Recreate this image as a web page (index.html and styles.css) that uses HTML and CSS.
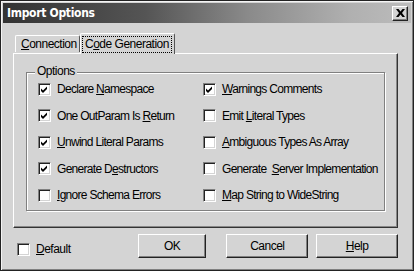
FILE: index.html
```html
<!DOCTYPE html>
<html lang="en">
<head>
  <meta charset="UTF-8">
  <title>Import Options</title>
  <link rel="stylesheet" href="styles.css">
</head>
<body>

  <!-- Dialog window -->
  <div class="dialog">

    <!-- Title bar -->
    <div class="titlebar">
      <span class="title">Import Options</span>
      <div class="close">
        <svg width="9" height="8" viewBox="0 0 9 8"><path d="M0 0h2.5l2 2.5 2-2.5H9L6 4l3 4H6.5l-2-2.5-2 2.5H0l3-4z" fill="#000"/></svg>
      </div>
    </div>

    <div class="content">
      <!-- Tabs -->
      <div class="tabs">
        <div class="tab"><u>C</u>onnection</div>
        <div class="tab active"><span class="focus">C<u>o</u>de Generation</span></div>
      </div>

      <!-- Tab page -->
      <div class="panel">
        <div class="group">
          <span class="legend">Options</span>
          <div class="options">
            <div class="opt"><span class="box checked"></span><span>Declare <u>N</u>amespace</span></div>
            <div class="opt"><span class="box checked"></span><span><u>W</u>arnings Comments</span></div>
            <div class="opt"><span class="box checked"></span><span>One OutParam Is <u>R</u>eturn</span></div>
            <div class="opt"><span class="box"></span><span>Emit <u>L</u>iteral Types</span></div>
            <div class="opt"><span class="box checked"></span><span><u>U</u>nwind Literal Params</span></div>
            <div class="opt"><span class="box"></span><span><u>A</u>mbiguous Types As Array</span></div>
            <div class="opt"><span class="box checked"></span><span>Generate D<u>e</u>structors</span></div>
            <div class="opt"><span class="box"></span><span>Generate  <u>S</u>erver Implementation</span></div>
            <div class="opt"><span class="box"></span><span><u>I</u>gnore Schema Errors</span></div>
            <div class="opt"><span class="box"></span><span><u>M</u>ap String to WideString</span></div>
          </div>
        </div>
      </div>

      <!-- Bottom row -->
      <div class="footer">
        <div class="opt default"><span class="box"></span><span><u>D</u>efault</span></div>
        <div class="btn ok">OK</div>
        <div class="btn cancel">Cancel</div>
        <div class="btn help"><span><u>H</u>elp</span></div>
      </div>
    </div>
  </div>

</body>
</html>
```

FILE: styles.css
```css
body {
  margin: 0;
  background: #fff;
  font-family: "Liberation Sans", Arial, sans-serif;
  font-size: 12px;
  letter-spacing: -0.5px;
  color: #000;
}
u {
  text-decoration: underline;
  text-underline-offset: 1px;
}
.dialog {
  width: 414px;
  height: 271px;
  box-sizing: border-box;
  background: #d4d4d4;
  border: 1px solid #222;
  box-shadow: inset 1px 1px 0 #f4f4f4, inset -1px -1px 0 #808080;
  padding: 2px;
  display: flex;
  flex-direction: column;
}
.titlebar {
  height: 20px;
  background: linear-gradient(to right, #333 0%, #555 35%, #8a8a8a 60%, #b0b0b0 85%, #bcbcbc 100%);
  display: flex;
  align-items: center;
  justify-content: space-between;
  padding: 0 3px 0 4px;
}
.title {
  color: #fff;
  font-family: "DejaVu Sans Condensed", "Liberation Sans", sans-serif;
  font-stretch: condensed;
  font-weight: bold;
  font-size: 12px;
  letter-spacing: -0.3px;
}
.close {
  width: 16px;
  height: 15px;
  box-sizing: border-box;
  background: #d4d4d4;
  border: 1px solid;
  border-color: #fff #222 #222 #fff;
  box-shadow: inset -1px -1px 0 #808080;
  display: flex;
  align-items: center;
  justify-content: center;
}
.content {
  flex: 1;
  padding: 10px 13px 0 10px;
  display: flex;
  flex-direction: column;
}
.tabs {
  display: flex;
  align-items: flex-end;
  height: 20px;
  padding-left: 2px;
  position: relative;
  z-index: 1;
  white-space: nowrap;
}
.tab {
  flex: none;
  height: 17px;
  box-sizing: border-box;
  width: 65px;
  padding-left: 5px;
  border: 1px solid;
  border-bottom: none;
  border-color: #fff #555 #555 #fff;
  border-radius: 2px 2px 0 0;
  line-height: 16px;
  margin-bottom: 1px;
}
.tab.active {
  height: 21px;
  width: 95px;
  margin-bottom: -1px;
  padding: 2px 0 0 2px;
  background: #d4d4d4;
}
.focus {
  display: inline-block;
  outline: 1px dotted #000;
  padding: 0 2px;
  line-height: 15px;
}
.panel {
  height: 175px;
  box-sizing: border-box;
  border: 1px solid;
  border-color: #fff #333 #333 #fff;
  box-shadow: inset -1px -1px 0 #888;
  padding: 18px 12px 0 12px;
}
.group {
  position: relative;
  height: 139px;
  box-sizing: border-box;
  border: 1px solid #808080;
  box-shadow: inset 1px 1px 0 #fff, 1px 1px 0 #fff;
  padding: 3px 0 0 11px;
}
.legend {
  position: absolute;
  top: -9px;
  left: 8px;
  padding: 0 2px;
  background: #d4d4d4;
  line-height: 15px;
}
.options {
  display: grid;
  grid-template-columns: 165px 1fr;
  grid-auto-rows: 26.5px;
  letter-spacing: -0.7px;
}
.opt {
  display: flex;
  align-items: center;
  gap: 6px;
  white-space: pre;
}
.box {
  width: 13px;
  height: 13px;
  box-sizing: border-box;
  background: #fff;
  border: 1px solid;
  border-color: #808080 #fff #fff #808080;
  box-shadow: inset 1px 1px 0 #222, inset -1px -1px 0 #d4d4d4;
  flex: none;
}
.box.checked {
  background: #fff url("data:image/svg+xml,%3Csvg xmlns='http://www.w3.org/2000/svg' width='11' height='11' viewBox='0 0 11 11'%3E%3Cpath d='M2 4.5l2 2 4-4v2.5l-4 4-2-2z' fill='%23000'/%3E%3C/svg%3E") no-repeat 0 0;
}
.footer {
  display: flex;
  align-items: flex-start;
  margin-top: 6px;
}
.default {
  margin: 8px 0 0 4px;
  width: 121px;
}
.btn {
  height: 24px;
  box-sizing: border-box;
  border: 1px solid;
  border-color: #fff #222 #222 #fff;
  box-shadow: inset -1px -1px 0 #808080;
  display: flex;
  align-items: center;
  justify-content: center;
}
.ok {
  width: 69px;
}
.cancel {
  width: 82px;
  margin-left: 20px;
}
.help {
  width: 82px;
  margin-left: 8px;
}
```
